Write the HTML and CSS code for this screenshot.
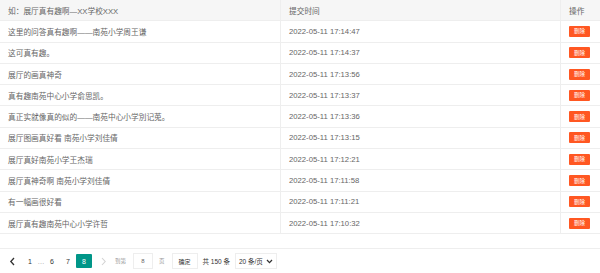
FILE: index.html
```html
<!DOCTYPE html>
<html lang="zh-CN">
<head>
	<meta charset="UTF-8">
	<title>留言列表</title>
	<link rel="stylesheet" href="styles.css">
</head>
<body>

	<div class="tableBox">
		<div class="row head">
			<div class="cell">如：展厅真有趣啊—XX学校XXX</div>
			<div class="cell">提交时间</div>
			<div class="cell">操作</div>
		</div>
		<div class="row">
			<div class="cell">这里的问答真有趣啊——南苑小学周王谦</div>
			<div class="cell">2022-05-11 17:14:47</div>
			<div class="cell"><span class="btnDel">删除</span></div>
		</div>
		<div class="row">
			<div class="cell">这可真有趣。</div>
			<div class="cell">2022-05-11 17:14:37</div>
			<div class="cell"><span class="btnDel">删除</span></div>
		</div>
		<div class="row">
			<div class="cell">展厅的画真神奇</div>
			<div class="cell">2022-05-11 17:13:56</div>
			<div class="cell"><span class="btnDel">删除</span></div>
		</div>
		<div class="row">
			<div class="cell">真有趣南苑中心小学俞思凯。</div>
			<div class="cell">2022-05-11 17:13:37</div>
			<div class="cell"><span class="btnDel">删除</span></div>
		</div>
		<div class="row">
			<div class="cell">真正实就像真的似的——南苑中心小学別记莵。</div>
			<div class="cell">2022-05-11 17:13:36</div>
			<div class="cell"><span class="btnDel">删除</span></div>
		</div>
		<div class="row">
			<div class="cell">展厅图画真好看 南苑小学刘佳倩</div>
			<div class="cell">2022-05-11 17:13:15</div>
			<div class="cell"><span class="btnDel">删除</span></div>
		</div>
		<div class="row">
			<div class="cell">展厅真好南苑小学王杰瑞</div>
			<div class="cell">2022-05-11 17:12:21</div>
			<div class="cell"><span class="btnDel">删除</span></div>
		</div>
		<div class="row">
			<div class="cell">展厅真神奇啊 南苑小学刘佳倩</div>
			<div class="cell">2022-05-11 17:11:58</div>
			<div class="cell"><span class="btnDel">删除</span></div>
		</div>
		<div class="row">
			<div class="cell">有一幅画很好看</div>
			<div class="cell">2022-05-11 17:11:21</div>
			<div class="cell"><span class="btnDel">删除</span></div>
		</div>
		<div class="row">
			<div class="cell">展厅真有趣南苑中心小学许哲</div>
			<div class="cell">2022-05-11 17:10:32</div>
			<div class="cell"><span class="btnDel">删除</span></div>
		</div>
	</div>

	<div class="pager">
		<span class="pItem prev">
			<svg width="7" height="9" viewBox="0 0 7 9"><path d="M5 1 L1.8 4.5 L5 8" fill="none" stroke="#333" stroke-width="1.3"/></svg>
		</span>
		<span class="pItem">1</span>
		<span class="pItem spr">…</span>
		<span class="pItem">6</span>
		<span class="pItem">7</span>
		<span class="pItem curr">8</span>
		<span class="pItem next">
			<svg width="7" height="9" viewBox="0 0 7 9"><path d="M2 1 L5.2 4.5 L2 8" fill="none" stroke="#d2d2d2" stroke-width="1.1"/></svg>
		</span>
		<span class="skip">到第</span>
		<span class="pInput">8</span>
		<span class="skip">页</span>
		<span class="pBtn">确定</span>
		<span class="count">共 150 条</span>
		<span class="pSelect">20 条/页
			<svg width="7" height="5" viewBox="0 0 7 5"><path d="M1 1 L3.5 3.6 L6 1" fill="none" stroke="#333" stroke-width="1.3"/></svg>
		</span>
	</div>

</body>
</html>
```

FILE: styles.css
```css
*{
	margin: 0;
	padding: 0;
	box-sizing: border-box;
}
body{
	width: 600px;
	height: 273px;
	background: #fff;
	font-family: "Liberation Sans", "Noto Sans CJK SC", sans-serif;
	font-size: 7.7px;
	color: #666;
	overflow: hidden;
}
.tableBox{
	height: 249px;
	border-bottom: 1px solid #eee;
}
.row{
	display: grid;
	grid-template-columns: 280px 280px 40px;
	height: 21.3px;
	border-bottom: 1px solid #eee;
}
.row.head{
	background: #f6f6f6;
}
.cell{
	display: flex;
	align-items: center;
	padding-left: 8px;
	white-space: nowrap;
	overflow: hidden;
}
.cell + .cell{
	border-left: 1px solid #eee;
}
.btnDel{
	display: inline-flex;
	align-items: center;
	justify-content: center;
	width: 21px;
	height: 11px;
	background: #ff5722;
	color: #fff;
	font-size: 5.5px;
	border-radius: 1px;
}
.pager{
	display: flex;
	align-items: center;
	height: 24px;
	padding-left: 4px;
	color: #333;
	font-size: 7px;
	white-space: nowrap;
}
.pager > span{
	flex-shrink: 0;
}
.pItem{
	display: flex;
	align-items: center;
	justify-content: center;
	width: 16px;
	height: 14px;
}
.pItem.spr{
	width: 6px;
	color: #999;
}
.pItem.prev{
	margin-right: 2px;
}
.pItem.curr{
	background: #009688;
	color: #fff;
	border-radius: 1px;
}
.pItem.next{
	margin: 0 4px 0 3px;
}
.skip{
	color: #999;
	font-size: 5.5px;
	margin-right: 7px;
}
.pInput{
	display: flex;
	align-items: center;
	justify-content: center;
	width: 20px;
	height: 16px;
	border: 1px solid #eee;
	color: #666;
	font-size: 6px;
	margin-right: 6px;
}
.pBtn{
	display: flex;
	align-items: center;
	justify-content: center;
	width: 26px;
	height: 16px;
	border: 1px solid #eee;
	font-size: 6px;
	margin-right: 5px;
}
.count{
	font-size: 6.5px;
	margin-right: 5px;
}
.pSelect{
	display: flex;
	align-items: center;
	gap: 3px;
	height: 16px;
	padding: 0 3px;
	border: 1px solid #eee;
	font-size: 6.5px;
}
```
